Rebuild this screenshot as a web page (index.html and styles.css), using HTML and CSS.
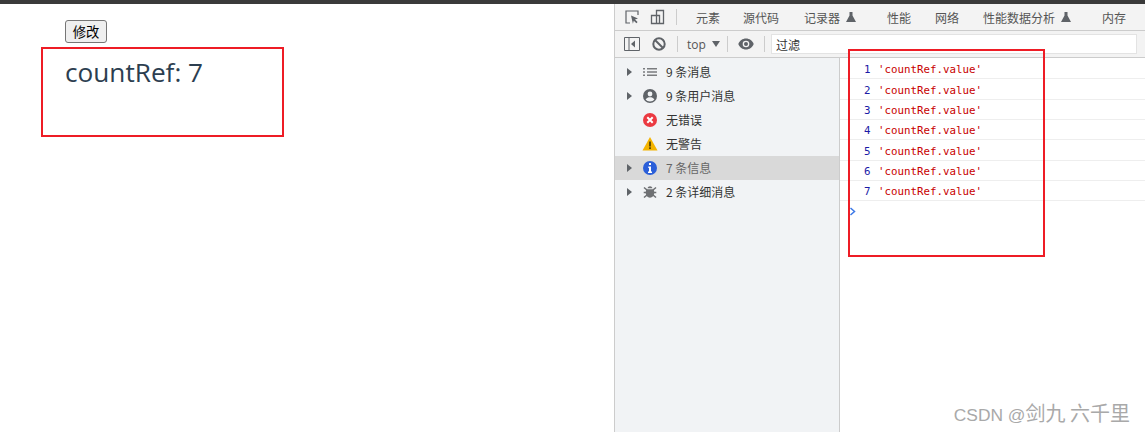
FILE: index.html
```html
<!DOCTYPE html>
<html lang="zh">
<head>
<meta charset="utf-8">
<title>countRef</title>
<link rel="stylesheet" href="styles.css">
</head>
<body>
<div class="topbar"></div>
<div class="main">
  <section class="page">
    <button class="btn">修改</button>
    <div class="count">countRef: 7</div>
    <div class="mark mark-left"></div>
  </section>
  <section class="devtools">
    <nav class="tabs">
      <svg class="ti ti-inspect" width="16" height="16" viewBox="0 0 16 16"><path d="M6 14H2V2h12v4" fill="none" stroke="#5f6368" stroke-width="1.2"/><path d="M7 6.500l7 3-3 1 2.600 2.600-1.200 1.200L9.800 11.700l-.9 3z" fill="#5f6368"/></svg>
      <svg class="ti ti-device" width="16" height="16" viewBox="0 0 16 16"><path d="M6.500 1.500h7v13h-7z M1.500 6.500h8v8h-8z" fill="none" stroke="#5f6368" stroke-width="1.300"/></svg>
      <span class="sep tabsep"></span>
      <span class="tab t1">元素</span>
      <span class="tab t2">源代码</span>
      <span class="tab t3">记录器<svg class="flask" width="10" height="10" viewBox="0 0 10 10"><path d="M3.500 0h3v3.500L10 10H0l3.500-6.500z" fill="#5f6368"/></svg></span>
      <span class="tab t4">性能</span>
      <span class="tab t5">网络</span>
      <span class="tab t6">性能数据分析<svg class="flask" width="10" height="10" viewBox="0 0 10 10"><path d="M3.500 0h3v3.500L10 10H0l3.500-6.500z" fill="#5f6368"/></svg></span>
      <span class="tab t7">内存</span>
    </nav>
    <div class="filterbar">
      <svg class="fi" width="16" height="14" viewBox="0 0 16 14"><path d="M.5.500h15v13H.5zM5 .5v13" fill="none" stroke="#5f6368"/><path d="M11 3.500v7L7 7z" fill="#5f6368"/></svg>
      <svg class="fi fi-block" width="14" height="14" viewBox="0 0 14 14"><circle cx="7" cy="7" r="5.700" fill="none" stroke="#5f6368" stroke-width="2"/><path d="M3 3l8 8" stroke="#5f6368" stroke-width="2"/></svg>
      <span class="sep"></span>
      <span class="ctx">top<i class="caret"></i></span>
      <span class="sep"></span>
      <svg class="fi fi-eye" width="16" height="12" viewBox="0 0 16 12"><path d="M8 .5C4.500.5 1.600 2.700.300 6c1.300 3.300 4.200 5.500 7.700 5.500s6.400-2.200 7.700-5.500C14.400 2.700 11.500.5 8 .5z" fill="#5f6368"/><circle cx="8" cy="6" r="3.300" fill="#f3f3f3"/><circle cx="8" cy="6" r="2" fill="#5f6368"/></svg>
      <span class="sep"></span>
      <div class="filter">过滤</div>
    </div>
    <div class="panes">
      <aside class="side">
        <div class="srow"><i class="arrow"></i>
          <svg class="si" width="16" height="16" viewBox="0 0 16 16"><path d="M1 4h2v1.500H1zM1 7.300h2v1.500H1zM1 10.600h2v1.500H1zM5 4h10v1.500H5zM5 7.300h10v1.500H5zM5 10.600h10v1.500H5z" fill="#7a7c7f"/></svg>
          <span>9 条消息</span></div>
        <div class="srow"><i class="arrow"></i>
          <svg class="si" width="16" height="16" viewBox="0 0 16 16"><circle cx="8" cy="8" r="7" fill="#5f6368"/><circle cx="8" cy="6" r="2.400" fill="#f1f3f5"/><path d="M3.600 11.500c1-1.700 2.700-2.300 4.400-2.300s3.400.6 4.400 2.300c-1 1.300-2.600 2-4.400 2s-3.400-.7-4.400-2z" fill="#f1f3f5"/></svg>
          <span>9 条用户消息</span></div>
        <div class="srow"><i class="arrow none"></i>
          <svg class="si" width="16" height="16" viewBox="0 0 16 16"><circle cx="8" cy="8" r="7" fill="#eb3941"/><path d="M5.300 5.300l5.400 5.400M10.700 5.300l-5.400 5.400" stroke="#fff" stroke-width="2"/></svg>
          <span>无错误</span></div>
        <div class="srow"><i class="arrow none"></i>
          <svg class="si" width="16" height="16" viewBox="0 0 16 16"><path d="M8 1l7.500 13.500H.5z" fill="#f4b400"/><path d="M7.100 5.500h1.800v5H7.100zM7.100 11.300h1.800v1.700H7.100z" fill="#5a4500"/></svg>
          <span>无警告</span></div>
        <div class="srow selected"><i class="arrow"></i>
          <svg class="si" width="16" height="16" viewBox="0 0 16 16"><circle cx="8" cy="8" r="7" fill="#2b5fd9"/><path d="M7 3h2v2H7zM6.300 6.500H9v5h1V13H6v-1.500h1V8h-.7z" fill="#fff"/></svg>
          <span>7 条信息</span></div>
        <div class="srow"><i class="arrow"></i>
          <svg class="si" width="16" height="16" viewBox="0 0 16 16"><path d="M5.500 4.300C5.800 3 6.800 2.300 8 2.300s2.200.7 2.500 2zM4.500 5.300h7c.5.900.8 2 .8 3.200 0 2.900-1.900 5.200-4.300 5.200S3.700 11.400 3.700 8.500c0-1.200.3-2.300.8-3.200z" fill="#6e7073"/><path d="M2 3.500l3 2.500M14 3.500l-3 2.500M1.700 8.500h3M14.300 8.500h-3M2 13.500l3-2.500M14 13.500l-3-2.500" stroke="#6e7073" stroke-width="1.600"/></svg>
          <span>2 条详细消息</span></div>
      </aside>
      <main class="console">
        <div class="log"><b>1</b><span>'countRef.value'</span></div>
        <div class="log"><b>2</b><span>'countRef.value'</span></div>
        <div class="log"><b>3</b><span>'countRef.value'</span></div>
        <div class="log"><b>4</b><span>'countRef.value'</span></div>
        <div class="log"><b>5</b><span>'countRef.value'</span></div>
        <div class="log"><b>6</b><span>'countRef.value'</span></div>
        <div class="log"><b>7</b><span>'countRef.value'</span></div>
        <svg class="prompt" width="7" height="9" viewBox="0 0 7 9"><path d="M1.500 1l4 3.500-4 3.500" fill="none" stroke="#3b78e7" stroke-width="1.500"/></svg>
      </main>
    </div>
    <div class="mark mark-right"></div>
  </section>
</div>
<div class="wm"><span class="wm-latin">CSDN @</span>剑九 六千里</div>
</body>
</html>
```
FILE: styles.css
```css
* { box-sizing: border-box; }
html, body { margin: 0; height: 100%; overflow: hidden; background: #fff; }
body { position: relative; display: flex; flex-direction: column; height: 432px; font-family: "Noto Sans CJK SC", "Liberation Sans", sans-serif; }
.topbar { height: 4px; background: #3a3a3a; flex: none; }
.main { flex: 1; display: flex; min-height: 0; }

.page { width: 614px; flex: none; padding: 16px 0 0 65px; }
.btn { display: block; width: 42px; height: 23px; padding: 0; font: 13.330px "Noto Sans CJK SC", sans-serif; color: #000; background: #efefef; border: 1px solid #767676; border-radius: 3px; }
.count { margin-top: 5px; font: 26.200px/48px "Open Sans", "Noto Sans", sans-serif; color: #2c3e50; }
.mark { position: absolute; border: 2px solid #ee1c25; pointer-events: none; }
.mark-left { left: 41px; top: 47px; width: 243px; height: 90px; }
.mark-right { left: 848px; top: 49px; width: 197px; height: 208px; }

.devtools { flex: 1; min-width: 0; display: flex; flex-direction: column; border-left: 1px solid #ccc; font-size: 12px; color: #333; }
.tabs { height: 27px; flex: none; display: flex; align-items: center; padding-left: 9px; background: #f3f3f3; border-bottom: 1px solid #ccc; color: #555; }
.ti { flex: none; margin-right: 9px; }
.ti-device { margin-left: 1px; }
.tabsep { margin: 0 0 0 1px; }
.sep { flex: none; width: 1px; height: 16px; background: #ccc; }
.tab { flex: none; display: inline-flex; align-items: center; white-space: nowrap; }
.flask { margin-left: 6px; }
.t1 { margin-left: 19px; }
.t2 { margin-left: 23px; }
.t3 { margin-left: 25px; }
.t4 { margin-left: 31px; }
.t5 { margin-left: 24px; }
.t6 { margin-left: 24px; }
.t7 { margin-left: 31px; }

.filterbar { height: 27px; flex: none; display: flex; align-items: center; padding-left: 9px; background: #f3f3f3; border-bottom: 1px solid #ccc; }
.fi { flex: none; }
.fi-block { margin: 0 11px 0 12px; }
.fi-eye { margin: 0 10px; }
.ctx { flex: none; width: 49px; padding-left: 9px; font: 12px "Open Sans", sans-serif; color: #555; display: flex; align-items: center; }
.caret { width: 0; height: 0; margin-left: 6px; border: 4px solid transparent; border-top: 6px solid #5f6368; border-bottom: 0; }
.filter { width: 366px; height: 20px; margin-left: 6px; padding-left: 4px; background: #fff; border: 1px solid #e3e3e3; line-height: 19px; color: #333; }

.panes { flex: 1; display: flex; min-height: 0; }
.side { width: 225px; flex: none; padding-top: 2px; background: #f1f3f5; border-right: 1px solid #ccc; }
.srow { height: 24px; display: flex; align-items: center; padding-left: 12px; }
.srow span { margin-top: -2px; }
.srow.selected { background: #d9d9d9; color: #666; }
.arrow { width: 0; height: 0; flex: none; margin-right: 10px; border: 4px solid transparent; border-left: 5px solid #5f6368; border-right: 0; }
.arrow.none { border-left-color: transparent; }
.si { flex: none; margin-right: 8px; }

.console { flex: 1; min-width: 0; padding-top: 1px; background: #fff; font: 10.800px "DejaVu Sans Mono", monospace; }
.log { height: 20.330px; display: flex; align-items: center; padding: 2.400px 0 0 24px; border-bottom: 1px solid #eee; }
.log b { font-weight: 400; color: #1a1aa6; width: 14px; }
.log span { color: #c80000; }
.prompt { display: block; margin: 6px 0 0 9px; }

.wm { position: absolute; right: 15px; top: 400px; font-family: "Noto Sans CJK SC", sans-serif; font-size: 20px; line-height: 26px; color: #a9a9a9; white-space: pre; }
.wm-latin { font-family: "Liberation Sans", sans-serif; font-size: 17.400px; }
```
